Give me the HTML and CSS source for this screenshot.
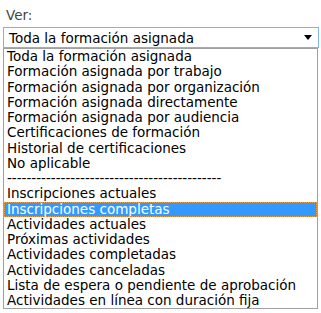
FILE: index.html
```html
<!DOCTYPE html>
<html>
<head>
<meta charset="utf-8">
<link rel="stylesheet" href="styles.css">
</head>
<body>
<div class="page">
  <div class="label">Ver:</div>
  <div class="select">
    <span class="select-text">Toda la formación asignada</span>
    <svg class="arrow" width="8" height="5" viewBox="0 0 8 5"><path d="M0 0H8L4 5Z" fill="#000"/></svg>
  </div>
  <ul class="list">
    <li>Toda la formación asignada</li>
    <li>Formación asignada por trabajo</li>
    <li>Formación asignada por organización</li>
    <li>Formación asignada directamente</li>
    <li>Formación asignada por audiencia</li>
    <li>Certificaciones de formación</li>
    <li>Historial de certificaciones</li>
    <li>No aplicable</li>
    <li>--------------------------------------------</li>
    <li>Inscripciones actuales</li>
    <li class="selected">Inscripciones completas</li>
    <li>Actividades actuales</li>
    <li>Próximas actividades</li>
    <li>Actividades completadas</li>
    <li>Actividades canceladas</li>
    <li>Lista de espera o pendiente de aprobación</li>
    <li>Actividades en línea con duración fija</li>
  </ul>
</div>
</body>
</html>
```
FILE: styles.css
```css
html, body {
  margin: 0;
  padding: 0;
  background: #fff;
}
.page {
  font-family: "DejaVu Sans", Verdana, sans-serif;
  font-size: 13.5px;
  color: #000;
  padding: 7px 0 0 3px;
  width: 316px;
}
.label {
  color: #444;
  padding-left: 3px;
  line-height: 16px;
  height: 20px;
}
.select {
  box-sizing: border-box;
  height: 21px;
  width: 316px;
  border: 1px solid #7eb4ea;
  display: flex;
  align-items: center;
  justify-content: space-between;
  padding: 0 6px 0 5px;
}
.select-text {
  line-height: 16px;
}
.arrow {
  display: block;
}
.list {
  list-style: none;
  margin: 0;
  padding: 0;
  box-sizing: border-box;
  width: 315px;
  border: 1px solid #a0a0a0;
}
.list li {
  height: 15.25px;
  line-height: 15px;
  padding-left: 3px;
  white-space: nowrap;
}
.list li.selected {
  background: #3399ff;
  color: #fff;
  outline: 1px dotted #e8a050;
  outline-offset: -1px;
}
```
